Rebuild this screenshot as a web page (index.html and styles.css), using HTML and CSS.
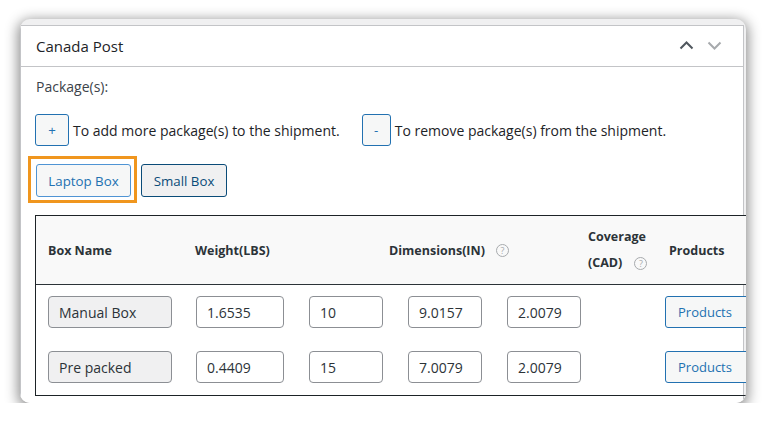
FILE: index.html
```html
<!DOCTYPE html>
<html lang="en">
<head>
<meta charset="utf-8">
<title>Canada Post</title>
<link rel="stylesheet" href="styles.css">
</head>
<body>
<div class="stage">
  <div class="card">
    <div class="panel">
      <div class="panel-head">
        <h2 class="title">Canada Post</h2>
        <div class="toggles">
          <svg class="chev" width="15" height="9" viewBox="0 0 15 9"><polyline points="1.5,7.5 7.5,1.5 13.5,7.5" fill="none" stroke="#50575e" stroke-width="2"/></svg>
          <svg class="chev" width="15" height="9" viewBox="0 0 15 9"><polyline points="1.5,1.5 7.5,7.5 13.5,1.5" fill="none" stroke="#a7aaad" stroke-width="2"/></svg>
        </div>
      </div>
      <div class="panel-body">
        <p class="label">Package(s):</p>
        <div class="add-row">
          <button class="btn btn-sq btn-plus">+</button>
          <span class="hint">To add more package(s) to the shipment.</span>
          <button class="btn btn-sq btn-minus">-</button>
          <span class="hint">To remove package(s) from the shipment.</span>
        </div>
        <div class="box-row">
          <span class="mark"><button class="btn btn-box btn-laptop">Laptop Box</button></span>
          <button class="btn btn-box btn-small">Small Box</button>
        </div>
        <div class="pkg-table">
          <div class="grid thead">
            <div class="th">Box Name</div>
            <div class="th th-weight">Weight(LBS)</div>
            <div class="th th-dims">Dimensions(IN) <span class="help">?</span></div>
            <div class="th th-cov"><span>Coverage</span><span>(CAD) <span class="help">?</span></span></div>
            <div class="th th-prod">Products</div>
          </div>
          <div class="grid trow">
            <div class="td"><input class="field field-name" value="Manual Box" readonly></div>
            <div class="td"><input class="field field-w" value="1.6535"></div>
            <div class="td"><input class="field field-d" value="10"></div>
            <div class="td"><input class="field field-d" value="9.0157"></div>
            <div class="td"><input class="field field-d" value="2.0079"></div>
            <div class="td"></div>
            <div class="td td-prod"><button class="btn btn-prod">Products</button></div>
          </div>
          <div class="grid trow">
            <div class="td"><input class="field field-name" value="Pre packed" readonly></div>
            <div class="td"><input class="field field-w" value="0.4409"></div>
            <div class="td"><input class="field field-d" value="15"></div>
            <div class="td"><input class="field field-d" value="7.0079"></div>
            <div class="td"><input class="field field-d" value="2.0079"></div>
            <div class="td"></div>
            <div class="td td-prod"><button class="btn btn-prod">Products</button></div>
          </div>
        </div>
      </div>
    </div>
  </div>
</div>
</body>
</html>
```

FILE: styles.css
```css
* { box-sizing: border-box; }
html, body { margin: 0; padding: 0; background: #fff; }
body {
  font-family: "Open Sans", "Noto Sans", "Liberation Sans", sans-serif;
  color: #3c434a;
  font-size: 14px;
}
.stage { padding: 19px 0 0 20px; }
.card {
  width: 726px;
  height: 384px;
  border-radius: 10px;
  overflow: hidden;
  background: #f0f0f1;
  padding-top: 6px;
  box-shadow: 0 3px 13px 2px rgba(0, 0, 0, 0.45);
}
.panel {
  margin-right: 2px;
  height: 400px;
  border: 1px solid #c3c4c7;
  background: #fff;
}
.panel-head {
  height: 41px;
  border-bottom: 1px solid #c3c4c7;
  display: flex;
  align-items: center;
  justify-content: space-between;
  padding-left: 15px;
}
.title {
  margin: 0;
  font-size: 15px;
  font-weight: 500;
  color: #1d2327;
}
.toggles {
  display: flex;
  gap: 13px;
  margin-right: 21px;
  margin-top: -1px;
}
.chev { display: block; }
.panel-body { padding: 10px 15px 0 15px; }
.label {
  margin: 0;
  line-height: 20px;
  font-size: 14px;
  color: #3c434a;
}
.add-row {
  margin-top: 17px;
  display: flex;
  align-items: center;
  height: 32px;
  margin-left: -1px;
}
.btn {
  font-family: inherit;
  font-size: 13.3px;
  border: 1px solid #2271b1;
  border-radius: 3px;
  background: #f6f7f7;
  color: #2271b1;
  padding: 0;
  cursor: pointer;
}
.btn-sq { height: 32px; }
.btn-plus { width: 34px; }
.btn-minus { width: 29px; margin-left: 22px; }
.hint { margin-left: 4px; color: #1d2327; font-size: 14px; }
.box-row {
  margin-top: 18px;
  display: flex;
  align-items: flex-start;
  gap: 10px;
}
.mark {
  display: block;
  border: 3px solid #f0961e;
  padding: 5px 3px 3px 5px;
  margin: -8px -6px -6px -8px;
}
.btn-box { display: block; height: 33px; }
.btn-laptop {
  width: 95px;
  border-color: #4f94d4;
}
.btn-small {
  width: 86px;
  background: #f0f0f1;
  border-color: #0a4b78;
  color: #0a4b78;
}
.pkg-table {
  margin-top: 18px;
  margin-left: -1px;
  width: 800px;
  border: 1px solid #1d2327;
  border-right: none;
}
.grid {
  display: grid;
  grid-template-columns: 148px 113px 99px 99px 81px 81px 1fr;
}
.thead {
  height: 69px;
  background: #f9f9f9;
  border-bottom: 1px solid #2c3338;
  align-items: center;
}
.th {
  font-weight: 700;
  font-size: 12.5px;
  color: #2c3338;
  padding-left: 12px;
}
.th-weight { padding-left: 11px; }
.th-dims {
  grid-column: 3 / span 3;
  padding-left: 92px;
  display: flex;
  align-items: center;
  gap: 11px;
}
.th-cov {
  display: flex;
  flex-direction: column;
  line-height: 26px;
}
.th-cov > span:last-child { display: flex; align-items: center; gap: 12px; }
.help {
  display: inline-flex;
  align-items: center;
  justify-content: center;
  width: 13px;
  height: 13px;
  border: 1px solid #a7aaad;
  border-radius: 50%;
  font-size: 9px;
  font-weight: 400;
  color: #a7aaad;
  line-height: 1;
}
.trow {
  height: 55px;
  align-items: start;
  padding-top: 11px;
}
.td { padding-left: 12px; }
.td-prod { padding-left: 8px; }
.field {
  display: block;
  height: 32px;
  border: 1px solid #8c8f94;
  border-radius: 4px;
  padding: 0 10px;
  font-family: inherit;
  font-size: 14px;
  color: #2c3338;
  background: #fff;
}
.field-name { width: 124px; background: #f0f0f1; }
.field-w { width: 88px; }
.field-d { width: 74px; }
.btn-prod {
  height: 32px;
  width: 92px;
  text-align: left;
  padding-left: 12px;
  font-size: 13px;
}
```
